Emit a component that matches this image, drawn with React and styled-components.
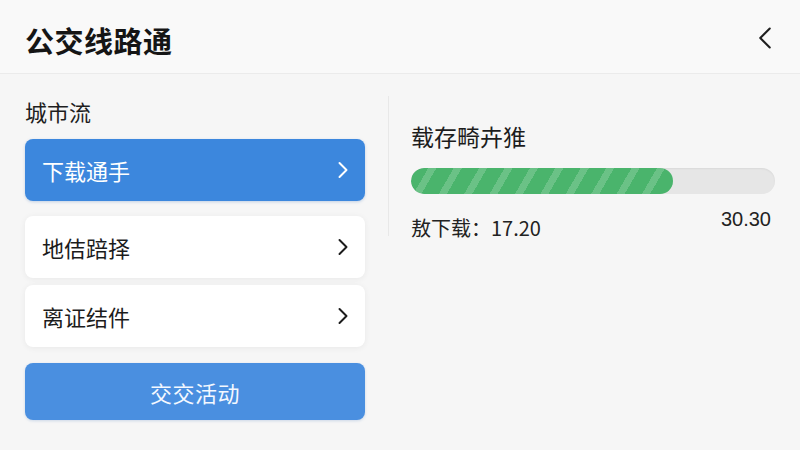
import React from 'react';
import styled, { createGlobalStyle } from 'styled-components';
import { ChevronLeft, ChevronRight } from 'lucide-react';

const GlobalStyle = createGlobalStyle`
  html, body {
    margin: 0;
    padding: 0;
    background: #f6f6f6;
  }
  body {
    font-family: "Noto Sans CJK SC", "Noto Sans", sans-serif;
    color: #1c1c1c;
  }
  * {
    box-sizing: border-box;
  }
`;

const Page = styled.div`
  width: 800px;
  height: 450px;
  overflow: hidden;
  background: #f6f6f6;
`;

const Header = styled.header`
  height: 74px;
  padding: 0 16px 0 25px;
  display: flex;
  align-items: center;
  justify-content: space-between;
  background: #f9f9f9;
  border-bottom: 1px solid #ebebeb;
`;

const Title = styled.h1`
  margin: 6px 0 0;
  font-size: 29px;
  line-height: 36px;
  font-weight: 700;
  letter-spacing: 0.5px;
  color: #151515;
`;

const BackButton = styled.button`
  border: none;
  background: none;
  padding: 0;
  margin-top: 2px;
  display: flex;
  color: #1e1e1e;
`;

const Body = styled.main`
  display: flex;
  align-items: flex-start;
  padding: 22px 25px 0 25px;
`;

const LeftColumn = styled.section`
  width: 340px;
  display: flex;
  flex-direction: column;
`;

const SectionLabel = styled.div`
  font-size: 22px;
  line-height: 30px;
  color: #1e1e1e;
  margin: 0 0 13px;
`;

const MenuItem = styled.div`
  height: 62px;
  padding: 0 8px 0 17px;
  display: flex;
  align-items: center;
  justify-content: space-between;
  border-radius: 8px;
  font-size: 22px;
  margin-bottom: ${(p) => p.$gap}px;
  background: ${(p) => (p.$active ? '#3c87dd' : '#ffffff')};
  color: ${(p) => (p.$active ? '#ffffff' : '#1c1c1c')};
  box-shadow: ${(p) =>
    p.$active ? '0 1px 3px rgba(40, 100, 180, 0.25)' : '0 1px 6px rgba(0, 0, 0, 0.06)'};
`;

const ActionButton = styled.button`
  height: 57px;
  border: none;
  border-radius: 8px;
  background: #4a8fe0;
  color: #f4f8ff;
  font-family: inherit;
  font-size: 22px;
  letter-spacing: 0.5px;
  box-shadow: 0 1px 3px rgba(40, 100, 180, 0.2);
`;

const Divider = styled.div`
  width: 1px;
  height: 140px;
  margin: 0 22px 0 23px;
  background: #e8e8e8;
`;

const RightColumn = styled.section`
  width: 364px;
  padding-top: 25px;
`;

const PanelTitle = styled.div`
  font-size: 23px;
  line-height: 30px;
  color: #1c1c1c;
  margin-bottom: 17px;
`;

const Track = styled.div`
  height: 26px;
  border-radius: 13px;
  background: #e6e6e6;
  box-shadow: inset 0 1px 2px rgba(0, 0, 0, 0.06);
  overflow: hidden;
`;

const Fill = styled.div`
  height: 100%;
  border-radius: 13px;
  background-color: #4ab46c;
  background-image: repeating-linear-gradient(
    120deg,
    rgba(255, 255, 255, 0) 0px,
    rgba(255, 255, 255, 0) 15px,
    rgba(255, 255, 255, 0.18) 15px,
    rgba(255, 255, 255, 0.18) 22px
  );
`;

const Stats = styled.div`
  display: flex;
  justify-content: space-between;
  align-items: flex-start;
  padding-right: 4px;
`;

const Downloaded = styled.span`
  font-size: 20px;
  line-height: 26px;
  margin-top: 21px;
  color: #222;
`;

const Total = styled.span`
  font-family: "Liberation Sans", "Noto Sans", sans-serif;
  font-size: 20px;
  line-height: 26px;
  margin-top: 12px;
  color: #222;
`;

const items = [
  { label: '下载通手', active: true, gap: 15 },
  { label: '地佶踣择', gap: 7 },
  { label: '离证结件', gap: 16 },
];

export default function App() {
  const progress = 72;
  return (
    <Page>
      <GlobalStyle />
      <Header>
        <Title>公交线路通</Title>
        <BackButton aria-label="返回">
          <ChevronLeft size={38} strokeWidth={1.3} />
        </BackButton>
      </Header>
      <Body>
        <LeftColumn>
          <SectionLabel>城市流</SectionLabel>
          {items.map((item) => (
            <MenuItem key={item.label} $active={item.active} $gap={item.gap}>
              <span>{item.label}</span>
              <ChevronRight size={28} strokeWidth={1.7} />
            </MenuItem>
          ))}
          <ActionButton>交交活动</ActionButton>
        </LeftColumn>
        <Divider />
        <RightColumn>
          <PanelTitle>载存畸卉猚</PanelTitle>
          <Track>
            <Fill style={{ width: `${progress}%` }} />
          </Track>
          <Stats>
            <Downloaded>敖下载：17.20</Downloaded>
            <Total>30.30</Total>
          </Stats>
        </RightColumn>
      </Body>
    </Page>
  );
}
